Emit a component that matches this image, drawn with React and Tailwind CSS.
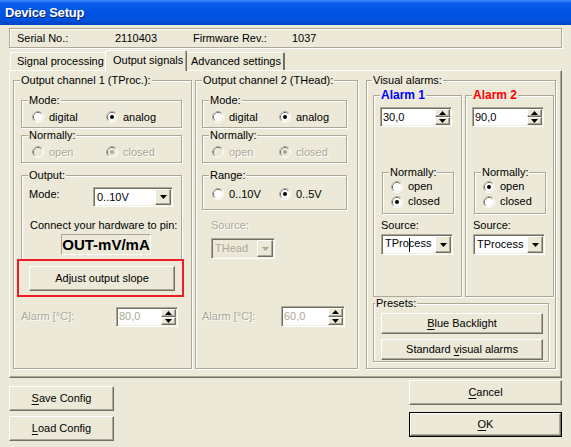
import React from "react";

const RAISED =
  "bg-[#ECE9D8] border border-t-white border-l-white border-r-[#716F64] border-b-[#716F64] shadow-[inset_-1px_-1px_0_#ACA899]";
const SUNKEN =
  "border border-t-[#ACA899] border-l-[#ACA899] border-r-white border-b-white shadow-[inset_1px_1px_0_#716F64,inset_-1px_-1px_0_#F1EFE2]";
const DIS = "text-[#ACA899] [text-shadow:1px_1px_0_#fff]";

function Tri({ up, color = "#000" }) {
  return (
    <svg width="7" height="4" viewBox="0 0 7 4" className="block">
      <path d={up ? "M3.5 0 L7 4 L0 4 Z" : "M0 0 L7 0 L3.5 4 Z"} fill={color} />
    </svg>
  );
}

function Radio({ checked, disabled }) {
  return (
    <svg width="12" height="12" viewBox="0 0 12 12" className="shrink-0 block">
      <circle cx="6" cy="6" r="5.5" fill="none" stroke="#fff" />
      <path d="M2.11 9.89 A5.5 5.5 0 0 1 9.89 2.11" fill="none" stroke="#ACA899" />
      <circle cx="6" cy="6" r="4.5" fill="none" stroke="#F1EFE2" />
      <path d="M2.82 9.18 A4.5 4.5 0 0 1 9.18 2.82" fill="none" stroke="#716F64" />
      <circle cx="6" cy="6" r="4" fill={disabled ? "#ECE9D8" : "#fff"} />
      {checked && <circle cx="6" cy="6" r="2" fill={disabled ? "#ACA899" : "#000"} />}
    </svg>
  );
}

function RadioItem({ checked, disabled, label, className = "" }) {
  return (
    <div className={`flex items-center gap-[5px] ${className}`}>
      <Radio checked={checked} disabled={disabled} />
      <span className={disabled ? DIS : ""}>{label}</span>
    </div>
  );
}

function Group({ label, className = "", legendClass = "ml-[6px] px-[1px]", children }) {
  return (
    <fieldset
      className={`min-w-0 m-0 p-0 border border-[#ACA899] shadow-[inset_1px_1px_0_#fff,1px_1px_0_#fff] ${className}`}
    >
      <legend className={`bg-[#ECE9D8] leading-[13px] ${legendClass}`}>{label}</legend>
      {children}
    </fieldset>
  );
}

function Spin({ value, disabled, className = "" }) {
  return (
    <div className={`flex bg-white ${SUNKEN} ${className}`}>
      <div className={`flex-1 flex items-center pl-[2px] ${disabled ? "text-[#ACA899]" : ""}`}>{value}</div>
      <div className="flex flex-col w-[15px] my-[1px] mr-[1px]">
        <div className={`flex-1 flex items-center justify-center ${RAISED}`}>
          <Tri up />
        </div>
        <div className={`flex-1 flex items-center justify-center ${RAISED}`}>
          <Tri />
        </div>
      </div>
    </div>
  );
}

function Combo({ disabled, className = "", children }) {
  return (
    <div className={`flex ${disabled ? "bg-[#ECE9D8]" : "bg-white"} ${SUNKEN} ${className}`}>
      <div className={`flex-1 flex items-center pl-[3px] ${disabled ? "text-[#ACA899]" : ""}`}>{children}</div>
      <div className={`w-[16px] my-[1px] mr-[1px] flex items-center justify-center ${RAISED}`}>
        <Tri color={disabled ? "#ACA899" : "#000"} />
      </div>
    </div>
  );
}

function Btn({ className = "", children }) {
  return <div className={`flex items-center justify-center ${RAISED} ${className}`}>{children}</div>;
}

function AlarmBox({ title, color, value, openChecked, caret, className = "" }) {
  return (
    <Group
      label={<span className={`font-bold text-[12px] leading-[14px] ${color}`}>{title}</span>}
      legendClass="ml-[6px] px-[1px] leading-[14px]"
      className={`w-[89px] h-[209px] ${className}`}
    >
      <div className="flex flex-col">
        <Spin value={value} className="mt-[5px] ml-[6px] w-[72px] h-[20px]" />
        <Group label="Normally:" className="mt-[39px] ml-[8px] w-[72px] h-[48px]">
          <div className="flex flex-col pl-[8px]">
            <RadioItem checked={openChecked} label="open" className="h-[15px]" />
            <RadioItem checked={!openChecked} label="closed" className="h-[15px]" />
          </div>
        </Group>
        <div className="mt-[5px] ml-[7px] h-[13px]">Source:</div>
        <Combo className="mt-[2px] ml-[7px] w-[72px] h-[21px]">
          {caret ? (
            <span>
              TPro
              <span className="inline-block w-px h-[14px] bg-black align-middle -mr-px" />
              cess
            </span>
          ) : (
            "TProcess"
          )}
        </Combo>
      </div>
    </Group>
  );
}

export default function App() {
  return (
    <div className="w-[571px] h-[447px] bg-[#ECE9D8] relative overflow-hidden font-[Liberation_Sans,Arial,sans-serif] text-[11px] leading-[13px] text-black">
      {/* Title bar */}
      <div className="h-[25px] flex items-center pl-[5px] bg-[linear-gradient(to_bottom,#3A8AF6_0%,#0A5EEA_14%,#0055E5_45%,#0151DD_80%,#0142C2_100%)]">
        <span className="text-white font-bold text-[13px] tracking-[-0.2px] [text-shadow:1px_1px_0_#0A246A]">
          Device Setup
        </span>
      </div>

      <div className="px-[9px] pt-[3px]">
        {/* Serial row */}
        <div className="h-[20px] w-[553px] flex items-center pl-[7px] border border-[#ACA899] shadow-[inset_1px_1px_0_#fff,1px_1px_0_#fff]">
          <span className="w-[98px]">Serial No.:</span>
          <span className="w-[78px]">2110403</span>
          <span className="w-[99px]">Firmware Rev.:</span>
          <span>1037</span>
        </div>

        {/* Tabs */}
        <div className="mt-[2px] h-[20px] flex items-end pl-[1px]">
          <div className="h-[18px] w-[97px] pl-[6px] flex items-center border-l border-t border-white border-r border-r-[#716F64] rounded-tl-[2px]">
            Signal processing
          </div>
          <div className="relative z-10 -ml-[2px] -mb-[1px] h-[21px] w-[82px] pl-[7px] pb-[1px] flex items-center bg-[#ECE9D8] border-l border-t border-r border-l-white border-t-white border-r-[#716F64] shadow-[inset_-1px_0_0_#ACA899] rounded-t-[2px]">
            Output signals
          </div>
          <div className="-ml-[2px] h-[18px] w-[100px] pl-[6px] flex items-center border-t border-white border-r-2 border-r-[#716F64] rounded-tr-[2px]">
            Advanced settings
          </div>
        </div>

        {/* Tab panel */}
        <div className="h-[308px] w-[553px] flex pt-[3px] pl-[3px] border-l border-t border-white border-r border-b border-r-[#716F64] border-b-[#716F64] shadow-[inset_-1px_-1px_0_#ACA899]">
          {/* Channel 1 */}
          <Group label="Output channel 1 (TProc.):" className="w-[179px] h-[295px] shrink-0">
            <div className="flex flex-col px-[7px]">
              <Group label="Mode:" className="mt-[7px] w-[161px] h-[34px]">
                <div className="h-[20px] flex items-center pl-[10px]">
                  <RadioItem label="digital" className="w-[74px]" />
                  <RadioItem label="analog" checked />
                </div>
              </Group>
              <Group label="Normally:" className="mt-[1px] w-[161px] h-[34px]">
                <div className="h-[20px] flex items-center pl-[10px]">
                  <RadioItem label="open" disabled className="w-[74px]" />
                  <RadioItem label="closed" disabled checked />
                </div>
              </Group>
              <Group label="Output:" className="mt-[6px] w-[161px] h-[91px]">
                <div className="flex flex-col">
                  <div className="mt-[5px] h-[20px] flex items-center pl-[7px]">
                    <span className="w-[64px] self-start pt-[1px]">Mode:</span>
                    <Combo className="w-[80px] h-[20px]">0..10V</Combo>
                  </div>
                  <div className="mt-[12px] pl-[8px]">Connect your hardware to pin:</div>
                  <div className="mt-[2px] ml-[39px] w-[90px] h-[21px] flex items-center justify-center border border-t-[#ACA899] border-l-[#ACA899] border-r-white border-b-white font-bold text-[15px] leading-[17px]">
                    OUT-mV/mA
                  </div>
                </div>
              </Group>
              <Btn className="mt-[6px] ml-[8px] w-[146px] h-[25px]">Adjust output slope</Btn>
              <div className="mt-[15px] h-[21px] flex items-center">
                <span className={`w-[95px] ${DIS}`}>Alarm [°C]:</span>
                <Spin value="80,0" disabled className="w-[62px] h-[20px]" />
              </div>
            </div>
          </Group>

          {/* Channel 2 */}
          <Group label="Output channel 2 (THead):" className="ml-[3px] w-[163px] h-[295px] shrink-0">
            <div className="flex flex-col px-[6px]">
              <Group label="Mode:" className="mt-[7px] w-[145px] h-[34px]">
                <div className="h-[20px] flex items-center pl-[9px]">
                  <RadioItem label="digital" className="w-[67px]" />
                  <RadioItem label="analog" checked />
                </div>
              </Group>
              <Group label="Normally:" className="mt-[1px] w-[145px] h-[34px]">
                <div className="h-[20px] flex items-center pl-[9px]">
                  <RadioItem label="open" disabled className="w-[67px]" />
                  <RadioItem label="closed" disabled checked />
                </div>
              </Group>
              <Group label="Range:" className="mt-[6px] w-[145px] h-[41px]">
                <div className="h-[24px] flex items-center pl-[9px]">
                  <RadioItem label="0..10V" className="w-[67px]" />
                  <RadioItem label="0..5V" checked />
                </div>
              </Group>
              <div className={`mt-[9px] ml-[9px] ${DIS}`}>Source:</div>
              <Combo disabled className="mt-[6px] ml-[9px] w-[64px] h-[21px]">
                THead
              </Combo>
              <div className="mt-[47px] h-[21px] flex items-center">
                <span className={`w-[79px] ${DIS}`}>Alarm [°C]:</span>
                <Spin value="60,0" disabled className="w-[64px] h-[21px]" />
              </div>
            </div>
          </Group>

          {/* Visual alarms */}
          <Group label="Visual alarms:" legendClass="ml-[5px] px-[1px]" className="ml-[8px] w-[190px] h-[295px] shrink-0">
            <div className="flex flex-col pl-[6px]">
              <div className="mt-[1px] flex">
                <AlarmBox title="Alarm 1" color="text-[#0000FF]" value="30,0" openChecked={false} caret />
                <AlarmBox title="Alarm 2" color="text-[#FF0000]" value="90,0" openChecked className="ml-[3px]" />
              </div>
              <Group label="Presets:" legendClass="ml-[1px] px-[1px]" className="w-[176px] h-[65px]">
                <div className="flex flex-col pl-[7px]">
                  <Btn className="mt-[3px] w-[162px] h-[21px]">
                    <span>
                      <span className="underline underline-offset-2">B</span>lue Backlight
                    </span>
                  </Btn>
                  <Btn className="mt-[5px] w-[162px] h-[21px]">
                    <span>
                      Standard <span className="underline underline-offset-2">v</span>isual alarms
                    </span>
                  </Btn>
                </div>
              </Group>
            </div>
          </Group>
        </div>

        {/* Bottom buttons */}
        <div className="flex justify-between items-start pt-[2px]">
          <div className="mt-[6px] flex flex-col gap-[5px]">
            <Btn className="w-[105px] h-[25px]">
              <span>
                <span className="underline underline-offset-2">S</span>ave Config
              </span>
            </Btn>
            <Btn className="w-[105px] h-[25px]">
              <span>
                <span className="underline underline-offset-2">L</span>oad Config
              </span>
            </Btn>
          </div>
          <div className="flex flex-col gap-[7px]">
            <Btn className="w-[153px] h-[25px]">
              <span>
                <span className="underline underline-offset-2">C</span>ancel
              </span>
            </Btn>
            <div className="w-[153px] h-[25px] border border-black">
              <Btn className="w-full h-full">
                <span>
                  <span className="underline underline-offset-2">O</span>K
                </span>
              </Btn>
            </div>
          </div>
        </div>
      </div>

      {/* Red annotation rectangle */}
      <div className="absolute left-[17px] top-[259px] w-[167px] h-[38px] border-2 border-[#ED1C24] pointer-events-none" />
    </div>
  );
}
